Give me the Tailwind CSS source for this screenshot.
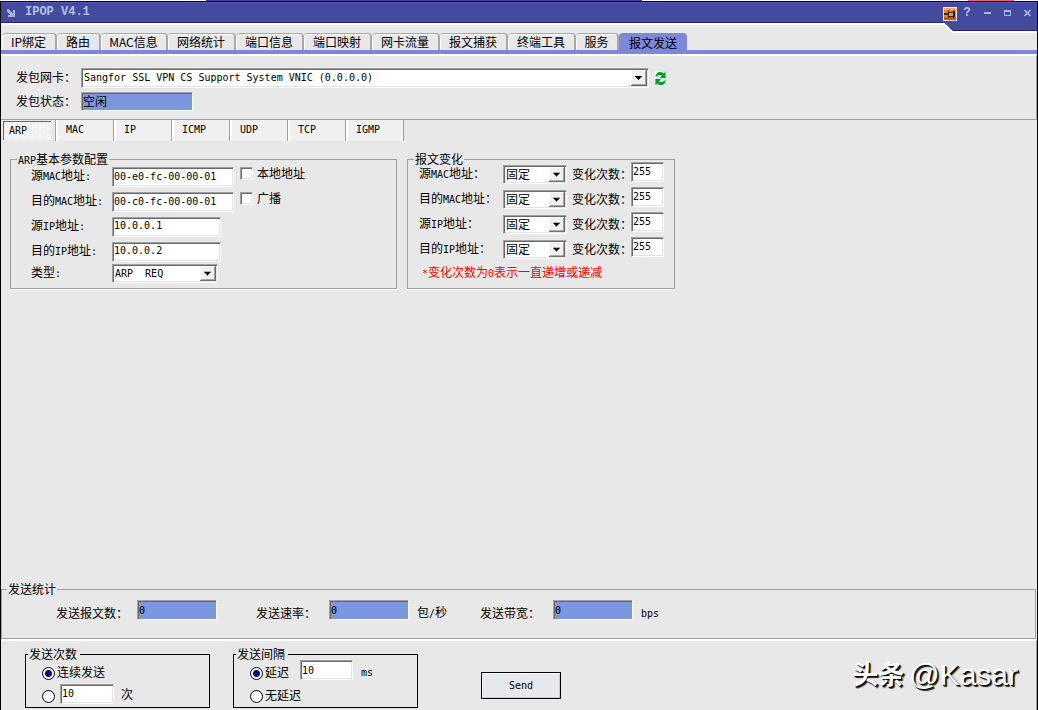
<!DOCTYPE html>
<html lang="zh-CN">
<head>
<meta charset="utf-8">
<title>IPOP V4.1</title>
<script src="https://cdn.jsdelivr.net/npm/@tailwindcss/browser@4"></script>
</head>
<body class="min-h-screen flex flex-col bg-[#e8e8e8] text-black text-[12px] leading-3 font-['DejaVu_Sans_Mono','Noto_Sans_CJK_SC',monospace]">

<!-- sliver of the window behind -->
<div class="h-px flex bg-white"><div class="ml-[206px] w-[436px] bg-[#3c46a0]"></div><div class="ml-auto mr-6 w-[46px] bg-[#f06070]"></div></div>

<div class="grow flex flex-col border-x border-t border-black">
  <header class="relative z-10 h-[21px] flex items-center bg-[#444a9e] border-t border-t-[#5058b0] border-b border-b-[#23287a] text-[#b0c4de]">
    <svg class="ml-[6px] size-2" viewBox="0 0 8 8" fill="#a5b4da" aria-hidden="true"><path d="M0 0h2v1h1v1h1v1h1v1h1V1h2v7H1V6h2V5H2V4H1V3H0z"/></svg>
    <h1 class="ml-[10px] pb-[2px] font-bold font-['Liberation_Mono',monospace]">IPOP V4.1</h1>
    <svg class="absolute right-0 top-[19px] w-[94px] h-[11px]" viewBox="0 0 94 11" aria-hidden="true"><path d="M0 1L9 11H94V9H10L2 0z" fill="#fff"/><path d="M2 0L10 9H94V0z" fill="#444a9e"/><path d="M1 0L10 8.500H94" fill="none" stroke="#23287a"/></svg>
    <div class="relative ml-auto flex items-center">
      <button aria-label="置顶"><svg class="block size-[14px] mt-[3px]" viewBox="0 0 14 14"><path fill="#fde" d="M0 0h14v14H0z"/><path fill="#f08418" d="M1 1h12v12H1z"/><path fill="#f8a850" d="M1 1h12v2H1z"/><path fill="#c05a08" d="M1 10h12v3H1z"/><path fill="#3a2410" d="M1 6h4v2H1zM5 3h1v8H5zM6 5h4v1H6zM6 9h4v1H6zM10 3h1v8h-1zM11 4h1v6h-1z"/><path fill="#b0b070" d="M6 6h4v3H6z"/></svg></button>
      <button class="w-5 h-4 font-bold font-['Liberation_Mono',monospace]" aria-label="帮助">?</button>
      <button class="w-5 h-4 flex items-center justify-center" aria-label="最小化"><svg width="7" height="8" viewBox="0 0 7 8" fill="#a9b4dc"><path d="M0 3h7v2H0z"/></svg></button>
      <button class="w-5 h-4 flex items-center justify-center" aria-label="最大化"><svg width="7" height="8" viewBox="0 0 7 8" fill="#a9b4dc"><path fill-rule="evenodd" d="M0 1h7v6H0zM1 3v3h5V3z"/></svg></button>
      <button class="w-5 h-4 flex items-center justify-center" aria-label="关闭"><svg width="7" height="8" viewBox="0 0 7 8" stroke="#a9b4dc" stroke-width="1.700"><path d="M.5 1l6 6M6.500 1l-6 6"/></svg></button>
    </div>
  </header>

  <nav class="h-[31px] flex items-end pl-px pt-2 border-t-2 border-t-white border-b-4 border-b-[#7f87da] font-['Noto_Sans_CJK_SC',sans-serif]">
    <button class="w-[55px] h-[17px] whitespace-nowrap border-t border-r-2 border-[#a8a8a8] rounded-t shadow-[inset_1px_1px_#fff]">IP绑定</button>
    <button class="w-[44px] h-[17px] whitespace-nowrap border-t border-r-2 border-[#a8a8a8] rounded-t shadow-[inset_1px_1px_#fff]">路由</button>
    <button class="w-[67px] h-[17px] whitespace-nowrap border-t border-r-2 border-[#a8a8a8] rounded-t shadow-[inset_1px_1px_#fff]">MAC信息</button>
    <button class="w-[68px] h-[17px] whitespace-nowrap border-t border-r-2 border-[#a8a8a8] rounded-t shadow-[inset_1px_1px_#fff]">网络统计</button>
    <button class="w-[68px] h-[17px] whitespace-nowrap border-t border-r-2 border-[#a8a8a8] rounded-t shadow-[inset_1px_1px_#fff]">端口信息</button>
    <button class="w-[68px] h-[17px] whitespace-nowrap border-t border-r-2 border-[#a8a8a8] rounded-t shadow-[inset_1px_1px_#fff]">端口映射</button>
    <button class="w-[68px] h-[17px] whitespace-nowrap border-t border-r-2 border-[#a8a8a8] rounded-t shadow-[inset_1px_1px_#fff]">网卡流量</button>
    <button class="w-[68px] h-[17px] whitespace-nowrap border-t border-r-2 border-[#a8a8a8] rounded-t shadow-[inset_1px_1px_#fff]">报文捕获</button>
    <button class="w-[68px] h-[17px] whitespace-nowrap border-t border-r-2 border-[#a8a8a8] rounded-t shadow-[inset_1px_1px_#fff]">终端工具</button>
    <button class="w-[43px] h-[17px] whitespace-nowrap border-t border-r-2 border-[#a8a8a8] rounded-t shadow-[inset_1px_1px_#fff]">服务</button>
    <button class="w-[68px] h-[17px] whitespace-nowrap rounded-t bg-[#7f87da] pt-[2px]" aria-current="page">报文发送</button>
  </nav>

  <section class="h-[66px] flex flex-col gap-1 pl-[15px] pt-[12px] border-t-2 border-t-white border-b border-r border-b-[#a0a0a0] border-r-[#a0a0a0]">
    <div class="h-5 flex items-center">
      <label for="nic" class="w-[65px]">发包网卡：</label>
      <div class="relative w-[568px] h-5 border border-t-[#a0a0a0] border-l-[#a0a0a0] border-r-white border-b-white">
        <select id="nic" class="appearance-none block w-full h-full pl-[2px] bg-white text-[10px] leading-4 shadow-[inset_1px_1px_#696969,inset_-1px_-1px_#e3e3e3]"><option>Sangfor SSL VPN CS Support System VNIC (0.0.0.0)</option></select>
        <svg class="absolute right-px top-px w-4 h-4 pointer-events-none" viewBox="0 0 16 16"><path fill="#696969" d="M0 0h16v16H0z"/><path fill="#fff" d="M0 0h15v15H0z"/><path fill="#a0a0a0" d="M1 1h14v14H1z"/><path fill="#f0f0f0" d="M1 1h13v13H1z"/><path d="M4 6h7v1h-1v1H9v1H8v1H7V9H6V8H5V7H4z"/></svg>
      </div>
      <button class="ml-[5px] bg-[#d3e6f5]" aria-label="刷新"><svg class="block w-[13px] h-[15px]" viewBox="0 0 12 15" fill="#0a9a14"><path fill="#eef6fb" d="M0 0h8L0 9z"/><path d="M1 6C1 3 3 1 5.500 1 7 1 8 1.500 9 2.500L11 1V7H5.500L7.500 4.800C6 3.500 4 3.500 1 6z"/><path d="M11 9C11 12 9 14 6.500 14 5 14 4 13.500 3 12.500L1 14V8H6.500L4.500 10.200C6 11.500 8 11.500 11 9z"/></svg></button>
    </div>
    <div class="h-[19px] flex items-center">
      <label for="st" class="w-[65px]">发包状态：</label>
      <input id="st" readonly value="空闲" class="w-[112px] h-[19px] pb-[2px] pl-px bg-[#7b96de] border border-t-[#a0a0a0] border-l-[#a0a0a0] border-r-white border-b-white shadow-[inset_1px_1px_#696969]">
    </div>
  </section>

  <nav class="h-[21px] flex text-[10px]">
    <div class="w-[55px] pl-[2px] pr-1 pt-px border-r border-r-[#a0a0a0]"><button class="block w-[48px] h-[19px] pl-[5px] text-left border-t border-l border-[#696969] bg-[repeating-conic-gradient(#ffffff_0_25%,#ebebeb_0_50%)] bg-size-[2px_2px]" aria-current="page">ARP</button></div>
    <button class="w-[58px] pl-2 pb-[2px] text-left bg-[#f0f0f0] border-l-2 border-l-white border-r border-r-[#a0a0a0]">MAC</button>
    <button class="w-[58px] pl-2 pb-[2px] text-left bg-[#f0f0f0] border-l-2 border-l-white border-r border-r-[#a0a0a0]">IP</button>
    <button class="w-[58px] pl-2 pb-[2px] text-left bg-[#f0f0f0] border-l-2 border-l-white border-r border-r-[#a0a0a0]">ICMP</button>
    <button class="w-[58px] pl-2 pb-[2px] text-left bg-[#f0f0f0] border-l-2 border-l-white border-r border-r-[#a0a0a0]">UDP</button>
    <button class="w-[58px] pl-2 pb-[2px] text-left bg-[#f0f0f0] border-l-2 border-l-white border-r border-r-[#a0a0a0]">TCP</button>
    <button class="w-[58px] pl-2 pb-[2px] text-left bg-[#f0f0f0] border-l-2 border-l-white border-r border-r-[#a0a0a0]">IGMP</button>
  </nav>

  <main class="grow flex items-start gap-[10px] pl-[9px] pt-3">
    <fieldset class="w-[387px] h-[136px] border border-[#a0a0a0] shadow-[0_1px_#fff] pl-5">
      <legend class="-ml-[14px] px-px h-3 leading-[14px]"><span class="text-[10px]">ARP</span>基本参数配置</legend>
      <div class="-mt-px grid grid-cols-[81px_128px_auto] auto-rows-[25px] items-center justify-start">
        <label for="smac">源<span class="text-[10px]">MAC</span>地址<span class="text-[10px]">:</span></label>
        <input id="smac" value="00-e0-fc-00-00-01" class="w-[122px] h-5 pl-px text-[10px] bg-white border border-t-[#a0a0a0] border-l-[#a0a0a0] border-r-white border-b-white shadow-[inset_1px_1px_#696969,inset_-1px_-1px_#e3e3e3]">
        <label class="flex items-center gap-1 pb-[6px]"><input type="checkbox" class="appearance-none size-[13px] bg-white border border-t-[#a0a0a0] border-l-[#a0a0a0] border-r-white border-b-white shadow-[inset_1px_1px_#696969,inset_-1px_-1px_#e3e3e3]">本地地址</label>
        <label for="dmac">目的<span class="text-[10px]">MAC</span>地址<span class="text-[10px]">:</span></label>
        <input id="dmac" value="00-c0-fc-00-00-01" class="w-[122px] h-5 pl-px text-[10px] bg-white border border-t-[#a0a0a0] border-l-[#a0a0a0] border-r-white border-b-white shadow-[inset_1px_1px_#696969,inset_-1px_-1px_#e3e3e3]">
        <label class="flex items-center gap-1 pb-[6px]"><input type="checkbox" class="appearance-none size-[13px] bg-white border border-t-[#a0a0a0] border-l-[#a0a0a0] border-r-white border-b-white shadow-[inset_1px_1px_#696969,inset_-1px_-1px_#e3e3e3]">广播</label>
        <label for="sip">源<span class="text-[10px]">IP</span>地址<span class="text-[10px]">:</span></label>
        <input id="sip" value="10.0.0.1" class="col-span-2 w-[109px] h-5 pl-px pb-[2px] text-[10px] bg-white border border-t-[#a0a0a0] border-l-[#a0a0a0] border-r-white border-b-white shadow-[inset_1px_1px_#696969,inset_-1px_-1px_#e3e3e3]">
        <label for="dip">目的<span class="text-[10px]">IP</span>地址<span class="text-[10px]">:</span></label>
        <input id="dip" value="10.0.0.2" class="col-span-2 w-[109px] h-5 pl-px pb-[2px] text-[10px] bg-white border border-t-[#a0a0a0] border-l-[#a0a0a0] border-r-white border-b-white shadow-[inset_1px_1px_#696969,inset_-1px_-1px_#e3e3e3]">
      </div>
      <div class="h-[18px] flex items-center">
        <label for="type" class="w-[81px]">类型<span class="text-[10px]">:</span></label>
        <div class="relative w-[106px] h-[19px] border border-t-[#a0a0a0] border-l-[#a0a0a0] border-r-white border-b-white">
          <select id="type" class="appearance-none block w-full h-full pl-[2px] pt-px bg-white text-[10px] whitespace-pre shadow-[inset_1px_1px_#696969,inset_-1px_-1px_#e3e3e3]"><option>ARP&nbsp; REQ</option></select>
          <svg class="absolute right-px top-px w-4 h-[15px] pointer-events-none" viewBox="0 0 16 16" preserveAspectRatio="none"><path fill="#696969" d="M0 0h16v16H0z"/><path fill="#fff" d="M0 0h15v15H0z"/><path fill="#a0a0a0" d="M1 1h14v14H1z"/><path fill="#f0f0f0" d="M1 1h13v13H1z"/><path d="M4 6h7v1h-1v1H9v1H8v1H7V9H6V8H5V7H4z"/></svg>
        </div>
      </div>
    </fieldset>

    <fieldset class="w-[268px] h-[136px] border border-[#a0a0a0] shadow-[0_1px_#fff] pl-[11px]">
      <legend class="-ml-[5px] px-px h-3 leading-[14px]">报文变化</legend>
      <div class="-mt-[3px] grid grid-cols-[84px_69px_59px_auto] auto-rows-[25px] items-center justify-start whitespace-nowrap">
        <label for="v1">源<span class="text-[10px]">MAC</span>地址：</label>
        <div class="relative w-16 h-[19px] border border-t-[#a0a0a0] border-l-[#a0a0a0] border-r-white border-b-white"><select id="v1" class="appearance-none block w-full h-full pl-[2px] bg-white shadow-[inset_1px_1px_#696969,inset_-1px_-1px_#e3e3e3]"><option>固定</option></select><svg class="absolute right-px top-px w-4 h-[15px] pointer-events-none" viewBox="0 0 16 16" preserveAspectRatio="none"><path fill="#696969" d="M0 0h16v16H0z"/><path fill="#fff" d="M0 0h15v15H0z"/><path fill="#a0a0a0" d="M1 1h14v14H1z"/><path fill="#f0f0f0" d="M1 1h13v13H1z"/><path d="M4 6h7v1h-1v1H9v1H8v1H7V9H6V8H5V7H4z"/></svg></div>
        <label for="n1">变化次数：</label>
        <input id="n1" value="255" class="self-start w-[33px] h-5 pl-px pb-[2px] text-[10px] bg-white border border-t-[#a0a0a0] border-l-[#a0a0a0] border-r-white border-b-white shadow-[inset_1px_1px_#696969,inset_-1px_-1px_#e3e3e3]">
        <label for="v2">目的<span class="text-[10px]">MAC</span>地址：</label>
        <div class="relative w-16 h-[19px] border border-t-[#a0a0a0] border-l-[#a0a0a0] border-r-white border-b-white"><select id="v2" class="appearance-none block w-full h-full pl-[2px] bg-white shadow-[inset_1px_1px_#696969,inset_-1px_-1px_#e3e3e3]"><option>固定</option></select><svg class="absolute right-px top-px w-4 h-[15px] pointer-events-none" viewBox="0 0 16 16" preserveAspectRatio="none"><path fill="#696969" d="M0 0h16v16H0z"/><path fill="#fff" d="M0 0h15v15H0z"/><path fill="#a0a0a0" d="M1 1h14v14H1z"/><path fill="#f0f0f0" d="M1 1h13v13H1z"/><path d="M4 6h7v1h-1v1H9v1H8v1H7V9H6V8H5V7H4z"/></svg></div>
        <label for="n2">变化次数：</label>
        <input id="n2" value="255" class="self-start w-[33px] h-5 pl-px pb-[2px] text-[10px] bg-white border border-t-[#a0a0a0] border-l-[#a0a0a0] border-r-white border-b-white shadow-[inset_1px_1px_#696969,inset_-1px_-1px_#e3e3e3]">
        <label for="v3">源<span class="text-[10px]">IP</span>地址：</label>
        <div class="relative w-16 h-[19px] border border-t-[#a0a0a0] border-l-[#a0a0a0] border-r-white border-b-white"><select id="v3" class="appearance-none block w-full h-full pl-[2px] bg-white shadow-[inset_1px_1px_#696969,inset_-1px_-1px_#e3e3e3]"><option>固定</option></select><svg class="absolute right-px top-px w-4 h-[15px] pointer-events-none" viewBox="0 0 16 16" preserveAspectRatio="none"><path fill="#696969" d="M0 0h16v16H0z"/><path fill="#fff" d="M0 0h15v15H0z"/><path fill="#a0a0a0" d="M1 1h14v14H1z"/><path fill="#f0f0f0" d="M1 1h13v13H1z"/><path d="M4 6h7v1h-1v1H9v1H8v1H7V9H6V8H5V7H4z"/></svg></div>
        <label for="n3">变化次数：</label>
        <input id="n3" value="255" class="self-start w-[33px] h-5 pl-px pb-[2px] text-[10px] bg-white border border-t-[#a0a0a0] border-l-[#a0a0a0] border-r-white border-b-white shadow-[inset_1px_1px_#696969,inset_-1px_-1px_#e3e3e3]">
        <label for="v4">目的<span class="text-[10px]">IP</span>地址：</label>
        <div class="relative w-16 h-[19px] border border-t-[#a0a0a0] border-l-[#a0a0a0] border-r-white border-b-white"><select id="v4" class="appearance-none block w-full h-full pl-[2px] bg-white shadow-[inset_1px_1px_#696969,inset_-1px_-1px_#e3e3e3]"><option>固定</option></select><svg class="absolute right-px top-px w-4 h-[15px] pointer-events-none" viewBox="0 0 16 16" preserveAspectRatio="none"><path fill="#696969" d="M0 0h16v16H0z"/><path fill="#fff" d="M0 0h15v15H0z"/><path fill="#a0a0a0" d="M1 1h14v14H1z"/><path fill="#f0f0f0" d="M1 1h13v13H1z"/><path d="M4 6h7v1h-1v1H9v1H8v1H7V9H6V8H5V7H4z"/></svg></div>
        <label for="n4">变化次数：</label>
        <input id="n4" value="255" class="self-start w-[33px] h-5 pl-px pb-[2px] text-[10px] bg-white border border-t-[#a0a0a0] border-l-[#a0a0a0] border-r-white border-b-white shadow-[inset_1px_1px_#696969,inset_-1px_-1px_#e3e3e3]">
      </div>
      <p class="pl-[3px] pt-[5px] text-[#ff0000]"><span class="text-[10px]">*</span>变化次数为<span class="text-[10px]">0</span>表示一直递增或递减</p>
    </fieldset>
  </main>

  <fieldset class="h-[56px] mr-px border border-[#a0a0a0] pl-[54px]">
    <legend class="-ml-[49px] px-px h-3 leading-[14px]">发送统计</legend>
    <div class="pt-[5px] flex items-end">
      <label for="s1" class="w-[81px]">发送报文数：</label>
      <input id="s1" readonly value="0" class="w-20 h-5 mr-[39px] pl-px text-[10px] bg-[#7b96de] border border-t-[#a0a0a0] border-l-[#a0a0a0] border-r-white border-b-white shadow-[inset_1px_1px_#696969]">
      <label for="s2" class="w-[73px]">发送速率：</label>
      <input id="s2" readonly value="0" class="w-20 h-5 mr-2 pl-px text-[10px] bg-[#7b96de] border border-t-[#a0a0a0] border-l-[#a0a0a0] border-r-white border-b-white shadow-[inset_1px_1px_#696969]">
      <span class="w-[63px]">包<span class="text-[10px]">/</span>秒</span>
      <label for="s3" class="w-[73px]">发送带宽：</label>
      <input id="s3" readonly value="0" class="w-20 h-5 mr-2 pl-px text-[10px] bg-[#7b96de] border border-t-[#a0a0a0] border-l-[#a0a0a0] border-r-white border-b-white shadow-[inset_1px_1px_#696969]">
      <span class="text-[10px]">bps</span>
    </div>
  </fieldset>

  <footer class="h-[71px] flex items-start pt-[7px] pl-6 pr-[18px] border-t-2 border-t-white border-r border-r-[#a0a0a0]">
    <fieldset class="w-[185px] h-[60px] border border-black pl-4">
      <legend class="-ml-[14px] px-px pr-[3px] h-3 leading-[14px]">发送次数</legend>
      <div class="pt-[2px] h-6 flex items-center"><label class="flex items-center gap-[2px]"><input type="radio" name="cnt" checked class="appearance-none size-[13px] rounded-full border border-black bg-white checked:bg-[radial-gradient(circle,#000080_3px,#ffffff_4px)]">连续发送</label></div>
      <div class="h-[22px] flex items-center gap-[5px]"><input type="radio" name="cnt" aria-label="指定次数" class="appearance-none size-[13px] mt-[2px] rounded-full border border-black bg-white checked:bg-[radial-gradient(circle,#000080_3px,#ffffff_4px)]"><input id="times" value="10" class="w-[54px] h-5 mb-[3px] pl-px text-[10px] bg-white border border-t-[#a0a0a0] border-l-[#a0a0a0] border-r-white border-b-white shadow-[inset_1px_1px_#696969,inset_-1px_-1px_#e3e3e3]"><label for="times" class="pl-[2px]">次</label></div>
    </fieldset>
    <fieldset class="ml-[23px] w-[185px] h-[60px] border border-black pl-4">
      <legend class="-ml-[14px] px-px pr-[3px] h-3 leading-[14px]">发送间隔</legend>
      <div class="pt-[2px] h-6 flex items-center"><label class="flex items-center gap-[2px]"><input type="radio" name="gap" checked class="appearance-none size-[13px] rounded-full border border-black bg-white checked:bg-[radial-gradient(circle,#000080_3px,#ffffff_4px)]">延迟</label><input id="delay" value="10" class="ml-[11px] w-[53px] h-5 mb-[6px] pl-px text-[10px] bg-white border border-t-[#a0a0a0] border-l-[#a0a0a0] border-r-white border-b-white shadow-[inset_1px_1px_#696969,inset_-1px_-1px_#e3e3e3]"><label for="delay" class="pl-2 text-[10px]">ms</label></div>
      <div class="pt-[2px] h-[22px] flex items-center"><label class="flex items-center gap-[2px]"><input type="radio" name="gap" class="appearance-none size-[13px] rounded-full border border-black bg-white checked:bg-[radial-gradient(circle,#000080_3px,#ffffff_4px)]">无延迟</label></div>
    </fieldset>
    <button class="ml-[63px] mt-6 w-20 h-[27px] border border-black bg-[#e6e8ee] shadow-[inset_1px_1px_#fff,inset_-1px_-1px_#c8c8d0] text-[10px]">Send</button>
    <p class="ml-auto mt-[11px] flex items-center gap-[5px] leading-8 text-white whitespace-nowrap font-['Liberation_Sans','Noto_Sans_CJK_SC',sans-serif] [text-shadow:1px_1px_#000,2px_2px_1px_#222]"><b class="text-[26px]">头条</b><span class="text-[30px]">@Kasar</span></p>
  </footer>
</div>
</body>
</html>
